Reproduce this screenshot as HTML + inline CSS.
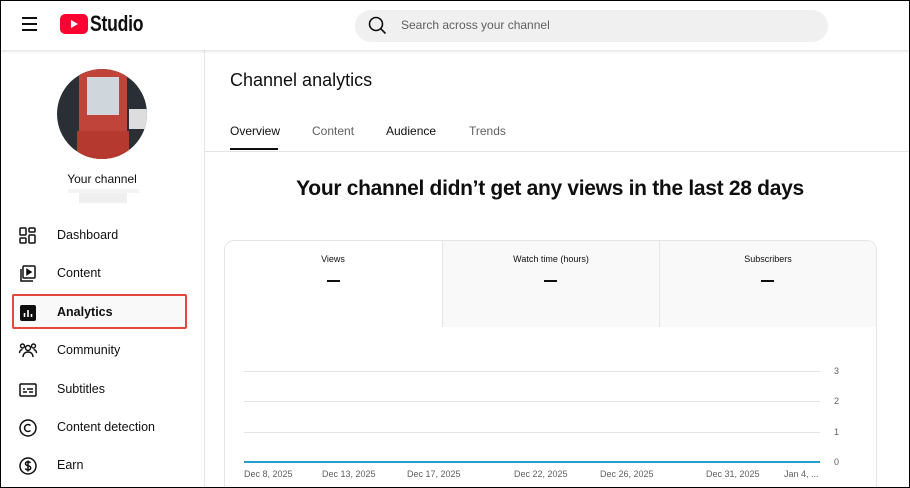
<!DOCTYPE html><html><head><style>
*{margin:0;padding:0;box-sizing:border-box}
html{width:910px;height:488px;overflow:hidden}
body{width:910px;height:488px;overflow:hidden;font-family:"Liberation Sans",sans-serif;background:#fff;position:relative;color:#0f0f0f}
.frame{position:absolute;inset:0;border:1px solid #000;z-index:10;pointer-events:none}
.hdr{position:absolute;left:0;top:0;width:910px;height:50px;background:#fff;box-shadow:0 1px 3px rgba(0,0,0,.15);z-index:5}
.side{position:absolute;left:0;top:50px;width:205px;height:438px;border-right:1px solid #e5e5e5}
.abs{position:absolute}
.nav{position:absolute;left:57px;font-size:12.5px;color:#0f0f0f}
.ic{position:absolute;left:18px}
.t{position:absolute;font-size:12px}
.lab{position:absolute;font-size:9px;color:#606060;top:469px}
</style></head><body>
<div class="frame"></div>
<div class="hdr">
 <div class="abs" style="left:22px;top:17px;width:15px;height:2px;background:#0f0f0f"></div>
 <div class="abs" style="left:22px;top:23px;width:15px;height:2px;background:#0f0f0f"></div>
 <div class="abs" style="left:22px;top:29px;width:15px;height:2px;background:#0f0f0f"></div>
 <svg class="abs" style="left:60px;top:14px" width="28" height="20"><rect width="28" height="20" rx="5" fill="#ff0033"/><path d="M11 6l7 4-7 4z" fill="#fff"/></svg>
 <div class="abs" style="left:90px;top:11px;font-size:22px;font-weight:bold;letter-spacing:-0.3px;transform:scaleX(.8);transform-origin:left">Studio</div>
 <div class="abs" style="left:355px;top:10px;width:473px;height:32px;background:#f0f0f0;border-radius:16px"></div>
 <svg class="abs" style="left:368px;top:16px" width="20" height="20"><circle cx="8" cy="8" r="6.5" stroke="#0f0f0f" stroke-width="1.6" fill="none"/><path d="M12.5 12.5l5 5" stroke="#0f0f0f" stroke-width="1.6"/></svg>
 <div class="abs" style="left:401px;top:18px;font-size:12px;color:#606060">Search across your channel</div>
</div>
<div class="side">
 <div class="abs" style="left:57px;top:19px;width:90px;height:90px;border-radius:50%;overflow:hidden;background:#2a2f36">
  <div class="abs" style="left:22px;top:0;width:48px;height:90px;background:#c0443a"></div>
  <div class="abs" style="left:30px;top:8px;width:32px;height:38px;background:#cfd6dc"></div>
  <div class="abs" style="left:20px;top:62px;width:52px;height:28px;background:#b5392e"></div>
  <div class="abs" style="left:72px;top:40px;width:18px;height:20px;background:#ddd"></div>
 </div>
 <div class="abs" style="left:0;width:204px;top:122px;text-align:center;font-size:12px">Your channel</div>
 <div class="abs" style="left:68px;top:139px;width:71px;height:4px;background:#f4f4f4"></div>
 <div class="abs" style="left:79px;top:143px;width:48px;height:10px;background:#efefef"></div>
</div>
<svg class="ic" style="top:226px" width="20" height="20" fill="none" stroke="#0f0f0f" stroke-width="1.5"><rect x="2" y="2" width="6" height="7" rx="1"/><rect x="11" y="2" width="6" height="4" rx="1"/><rect x="2" y="12" width="6" height="5" rx="1"/><rect x="11" y="9" width="6" height="8" rx="1"/></svg>
<div class="nav" style="top:228px">Dashboard</div>
<svg class="ic" style="top:264px" width="20" height="20" fill="none" stroke="#0f0f0f" stroke-width="1.5"><rect x="5" y="2" width="12" height="12" rx="1"/><path d="M3 5v12h12"/><path d="M9 5.5l4 2.5-4 2.5z" fill="#0f0f0f"/></svg>
<div class="nav" style="top:266px">Content</div>
<div class="abs" style="left:12px;top:294px;width:175px;height:35px;border:2px solid #e8453c;border-radius:2px;background:#f9f9f9"></div>
<svg class="ic" style="top:303px" width="20" height="20"><rect x="2" y="2" width="16" height="16" rx="2" fill="#0f0f0f"/><path d="M6.5 10v4M10 7v7M13.5 11v3" stroke="#fff" stroke-width="1.6"/></svg>
<div class="nav" style="top:305px;font-weight:bold">Analytics</div>
<svg class="ic" style="top:341px" width="20" height="20" fill="none" stroke="#0f0f0f" stroke-width="1.4"><circle cx="10" cy="7" r="2.5"/><circle cx="4.5" cy="5" r="2"/><circle cx="15.5" cy="5" r="2"/><path d="M5 16c0-3 2-5 5-5s5 2 5 5M1.5 12c0-2 1.5-3.5 3-3.5M18.5 12c0-2-1.5-3.5-3-3.5"/></svg>
<div class="nav" style="top:343px">Community</div>
<svg class="ic" style="top:380px" width="20" height="20" fill="none" stroke="#0f0f0f" stroke-width="1.5"><rect x="2" y="4" width="16" height="12" rx="1"/><path d="M5 12h4M11 12h4M5 9h2M9 9h6"/></svg>
<div class="nav" style="top:382px">Subtitles</div>
<svg class="ic" style="top:418px" width="20" height="20" fill="none" stroke="#0f0f0f" stroke-width="1.5"><circle cx="10" cy="10" r="8"/><path d="M12.5 7.5a3.5 3.5 0 1 0 0 5"/></svg>
<div class="nav" style="top:420px">Content detection</div>
<svg class="ic" style="top:456px" width="20" height="20" fill="none" stroke="#0f0f0f" stroke-width="1.5"><circle cx="10" cy="10" r="8"/><path d="M12.5 7c-.5-1-1.5-1.3-2.5-1.3-1.5 0-2.5.8-2.5 2s1 1.6 2.5 2 2.7.9 2.7 2.2-1.2 2-2.7 2c-1.2 0-2.2-.5-2.7-1.4M10 4.5v11"/></svg>
<div class="nav" style="top:458px">Earn</div>
<div class="abs" style="left:230px;top:70px;font-size:18px;color:#0f0f0f">Channel analytics</div>
<div class="t" style="left:230px;top:124px">Overview</div>
<div class="t" style="left:312px;top:124px;color:#606060">Content</div>
<div class="t" style="left:386px;top:124px">Audience</div>
<div class="t" style="left:469px;top:124px;color:#606060">Trends</div>
<div class="abs" style="left:230px;top:148px;width:48px;height:2px;background:#0f0f0f"></div>
<div class="abs" style="left:205px;top:151px;width:705px;height:1px;background:#e5e5e5"></div>
<div class="abs" style="left:205px;width:690px;top:177px;text-align:center;font-size:21px;font-weight:bold;letter-spacing:-0.3px">Your channel didn’t get any views in the last 28 days</div>
<div class="abs" style="left:224px;top:240px;width:653px;height:248px;border:1px solid #e5e5e5;border-bottom:none;border-radius:10px 10px 0 0;overflow:hidden">
 <div class="abs" style="left:217px;top:0;width:436px;height:86px;background:#f9f9f9;border-left:1px solid #e5e5e5"></div>
 <div class="abs" style="left:434px;top:0;width:1px;height:86px;background:#e5e5e5"></div>
</div>
<div class="abs" style="left:224px;width:218px;top:254px;text-align:center;font-size:9px;color:#0f0f0f">Views</div>
<div class="abs" style="left:442px;width:218px;top:254px;text-align:center;font-size:9px;color:#0f0f0f">Watch time (hours)</div>
<div class="abs" style="left:659px;width:218px;top:254px;text-align:center;font-size:9px;color:#0f0f0f">Subscribers</div>
<div class="abs" style="left:327px;top:280px;width:13px;height:1.5px;background:#0f0f0f"></div>
<div class="abs" style="left:544px;top:280px;width:13px;height:1.5px;background:#0f0f0f"></div>
<div class="abs" style="left:761px;top:280px;width:13px;height:1.5px;background:#0f0f0f"></div>
<div class="abs" style="left:244px;top:371px;width:576px;height:1px;background:#e5e5e5"></div>
<div class="abs" style="left:244px;top:401px;width:576px;height:1px;background:#e5e5e5"></div>
<div class="abs" style="left:244px;top:432px;width:576px;height:1px;background:#e5e5e5"></div>
<div class="abs" style="left:244px;top:461px;width:576px;height:2px;background:#2a9fcd"></div>
<div class="abs" style="left:834px;top:366px;font-size:9px;color:#606060">3</div>
<div class="abs" style="left:834px;top:396px;font-size:9px;color:#606060">2</div>
<div class="abs" style="left:834px;top:427px;font-size:9px;color:#606060">1</div>
<div class="abs" style="left:834px;top:457px;font-size:9px;color:#606060">0</div>
<div class="lab" style="left:244px">Dec 8, 2025</div>
<div class="lab" style="left:322px">Dec 13, 2025</div>
<div class="lab" style="left:407px">Dec 17, 2025</div>
<div class="lab" style="left:514px">Dec 22, 2025</div>
<div class="lab" style="left:600px">Dec 26, 2025</div>
<div class="lab" style="left:706px">Dec 31, 2025</div>
<div class="lab" style="left:784px">Jan 4, ...</div>
</body></html>
